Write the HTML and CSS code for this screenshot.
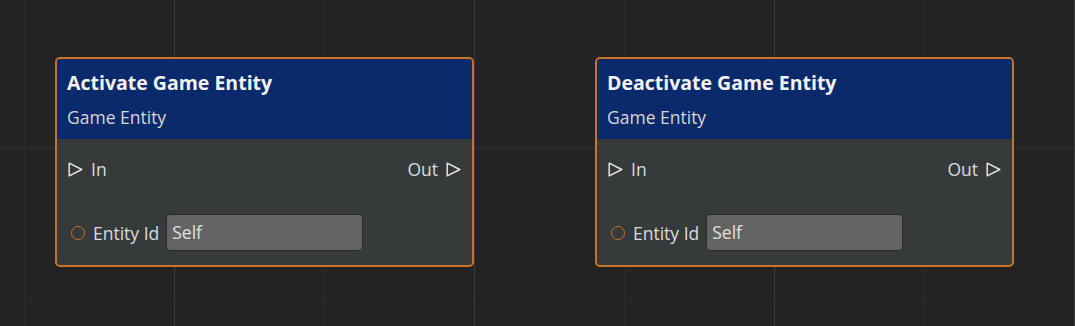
FILE: index.html
```html
<!DOCTYPE html>
<html lang="en">
  <head>
    <meta charset="UTF-8" />
    <meta name="viewport" content="width=device-width, initial-scale=1.0" />
    <title>Script Graph</title>
    <link rel="stylesheet" href="styles.css">
  </head>
  <body>
    <div class="canvas">
      <div class="node">
        <div class="node-header">
          <div class="node-title">Activate Game Entity</div>
          <div class="node-subtitle">Game Entity</div>
        </div>
        <div class="node-body">
          <div class="exec-row">
            <span class="pin">
              <svg class="exec-icon" width="15" height="15" viewBox="0 0 15 15">
                <path d="M1.2 1.2 L13.8 7.5 L1.2 13.8 Z" />
              </svg>
              In
            </span>
            <span class="pin">
              Out
              <svg class="exec-icon" width="15" height="15" viewBox="0 0 15 15">
                <path d="M1.2 1.2 L13.8 7.5 L1.2 13.8 Z" />
              </svg>
            </span>
          </div>
          <div class="data-row">
            <span class="data-pin"></span>
            <span class="data-label">Entity Id</span>
            <div class="data-input">Self</div>
          </div>
        </div>
      </div>

      <div class="node">
        <div class="node-header">
          <div class="node-title">Deactivate Game Entity</div>
          <div class="node-subtitle">Game Entity</div>
        </div>
        <div class="node-body">
          <div class="exec-row">
            <span class="pin">
              <svg class="exec-icon" width="15" height="15" viewBox="0 0 15 15">
                <path d="M1.2 1.2 L13.8 7.5 L1.2 13.8 Z" />
              </svg>
              In
            </span>
            <span class="pin">
              Out
              <svg class="exec-icon" width="15" height="15" viewBox="0 0 15 15">
                <path d="M1.2 1.2 L13.8 7.5 L1.2 13.8 Z" />
              </svg>
            </span>
          </div>
          <div class="data-row">
            <span class="data-pin"></span>
            <span class="data-label">Entity Id</span>
            <div class="data-input">Self</div>
          </div>
        </div>
      </div>
    </div>
  </body>
</html>
```

FILE: styles.css
```css
html,
body {
  margin: 0;
  padding: 0;
  height: 100%;
}
body {
  font-family: "Open Sans", "Noto Sans", sans-serif;
  color: #dcdcdc;
  background-color: #232323;
  background-image:
    linear-gradient(to right, #3a3a3a 1px, transparent 1px),
    linear-gradient(to bottom, #303030 1px, transparent 1px),
    linear-gradient(to right, #2a2a2a 1px, transparent 1px),
    linear-gradient(to bottom, #2a2a2a 1px, transparent 1px);
  background-size: 300px 100%, 100% 300px, 150px 100%, 100% 150px;
  background-position: 174px 0, 0 147px, 24px 0, 0 -3px;
}
.canvas {
  display: flex;
  gap: 121px;
  padding: 57px 0 0 55px;
}
.node {
  width: 415px;
  border: 2px solid #c97326;
  border-radius: 5px;
  overflow: hidden;
  background-color: #363a3b;
}
.node-header {
  height: 80px;
  box-sizing: border-box;
  padding: 11px 10px 0;
  background-color: #0b2a6b;
}
.node-title {
  font-size: 19.5px;
  font-weight: 700;
  line-height: 26px;
  color: #f2f2f2;
}
.node-subtitle {
  margin-top: 9px;
  font-size: 17.5px;
  line-height: 24px;
  color: #d6d6d6;
}
.node-body {
  height: 126px;
  box-sizing: border-box;
  padding: 18px 11px 0 11px;
}
.exec-row {
  display: flex;
  justify-content: space-between;
  align-items: center;
  height: 24px;
}
.pin {
  display: flex;
  align-items: center;
  gap: 8px;
  font-size: 17.5px;
}
.exec-icon path {
  fill: none;
  stroke: #e4e4e4;
  stroke-width: 1.5;
  stroke-linejoin: round;
}
.data-row {
  display: flex;
  align-items: center;
  margin-top: 33px;
  height: 37px;
}
.data-pin {
  width: 12px;
  height: 12px;
  margin-left: 3px;
  border: 1.8px solid #c97326;
  border-radius: 50%;
}
.data-label {
  margin-left: 8px;
  font-size: 17.5px;
}
.data-input {
  margin-left: 7px;
  width: 197px;
  height: 37px;
  box-sizing: border-box;
  padding: 0 5px;
  line-height: 35px;
  font-size: 17.5px;
  color: #e0e0e0;
  background-color: #636363;
  border: 1px solid #2c2c2c;
  border-radius: 4px;
}
```
